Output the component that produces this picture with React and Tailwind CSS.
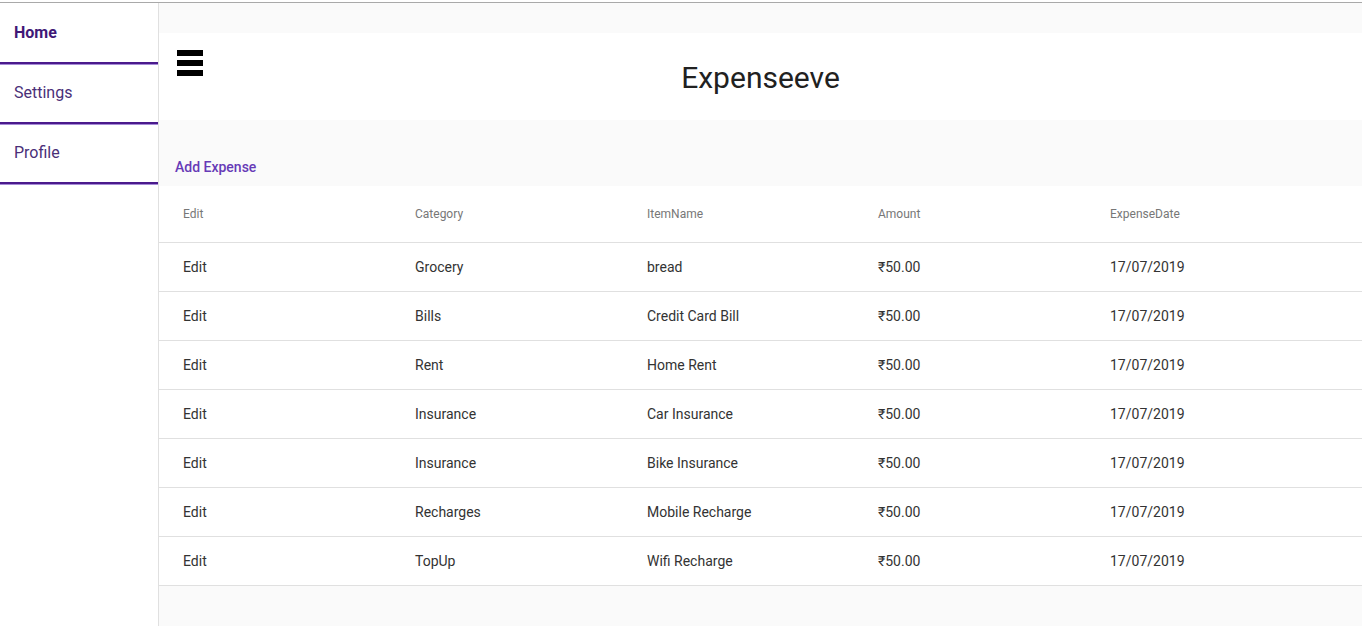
import React from 'react';

const expenses = [
  { category: 'Grocery', item: 'bread', amount: '₹50.00', date: '17/07/2019' },
  { category: 'Bills', item: 'Credit Card Bill', amount: '₹50.00', date: '17/07/2019' },
  { category: 'Rent', item: 'Home Rent', amount: '₹50.00', date: '17/07/2019' },
  { category: 'Insurance', item: 'Car Insurance', amount: '₹50.00', date: '17/07/2019' },
  { category: 'Insurance', item: 'Bike Insurance', amount: '₹50.00', date: '17/07/2019' },
  { category: 'Recharges', item: 'Mobile Recharge', amount: '₹50.00', date: '17/07/2019' },
  { category: 'TopUp', item: 'Wifi Recharge', amount: '₹50.00', date: '17/07/2019' },
];

const navItems = [
  { label: 'Home', active: true },
  { label: 'Settings' },
  { label: 'Profile' },
];

const cols = 'grid grid-cols-[232px_232px_231px_232px_1fr] pl-[24px] items-center';

function NavItem({ label, active }) {
  return (
    <div>
      <div
        className={
          'h-[57px] flex items-center pl-[14px] pb-[2px] text-[16px] ' +
          (active ? 'font-bold text-[#3f1877]' : 'text-[#4a2f78]')
        }
      >
        {label}
      </div>
      <div className="h-[2px] bg-[#4a1a8c]" />
      <div className="h-[1px] bg-[#a58bd6]" />
    </div>
  );
}

function Hamburger() {
  return (
    <div className="flex flex-col gap-[4px] w-[26px]">
      <div className="h-[6px] bg-black" />
      <div className="h-[6px] bg-black" />
      <div className="h-[6px] bg-black" />
    </div>
  );
}

export default function App() {
  return (
    <div className="pt-[2px] bg-white font-['Roboto','Liberation_Sans',sans-serif]">
      <div className="border-t border-[#a9a9a9] flex min-h-[624px]">
        {/* Sidebar */}
        <aside className="w-[159px] shrink-0 border-r border-[#e0e0e0] bg-white pt-[2px]">
          {navItems.map((n) => (
            <NavItem key={n.label} {...n} />
          ))}
        </aside>

        {/* Main */}
        <main className="flex-1 bg-[#fafafa] pt-[30px]">
          <header className="h-[87px] bg-white grid grid-cols-[1fr_auto_1fr]">
            <div className="pl-[18px] pt-[17px]">
              <Hamburger />
            </div>
            <h1 className="self-center text-[30px] text-[#212121] font-normal leading-none pt-[3px]">
              Expenseeve
            </h1>
            <div />
          </header>

          <div className="pt-[37px] pb-[9px] pl-[16px]">
            <a className="block text-[14px] leading-[20px] text-[#673ab7] font-medium cursor-pointer">Add Expense</a>
          </div>

          <div className="bg-white">
            <div className={cols + ' h-[57px] border-b border-[#e0e0e0] text-[12px] text-[#777777]'}>
              <div>Edit</div>
              <div>Category</div>
              <div>ItemName</div>
              <div>Amount</div>
              <div>ExpenseDate</div>
            </div>
            {expenses.map((e, i) => (
              <div key={i} className={cols + ' h-[49px] border-b border-[#e0e0e0] text-[14px] text-[#333333]'}>
                <div className="cursor-pointer">Edit</div>
                <div>{e.category}</div>
                <div>{e.item}</div>
                <div>{e.amount}</div>
                <div>{e.date}</div>
              </div>
            ))}
          </div>
        </main>
      </div>
    </div>
  );
}
